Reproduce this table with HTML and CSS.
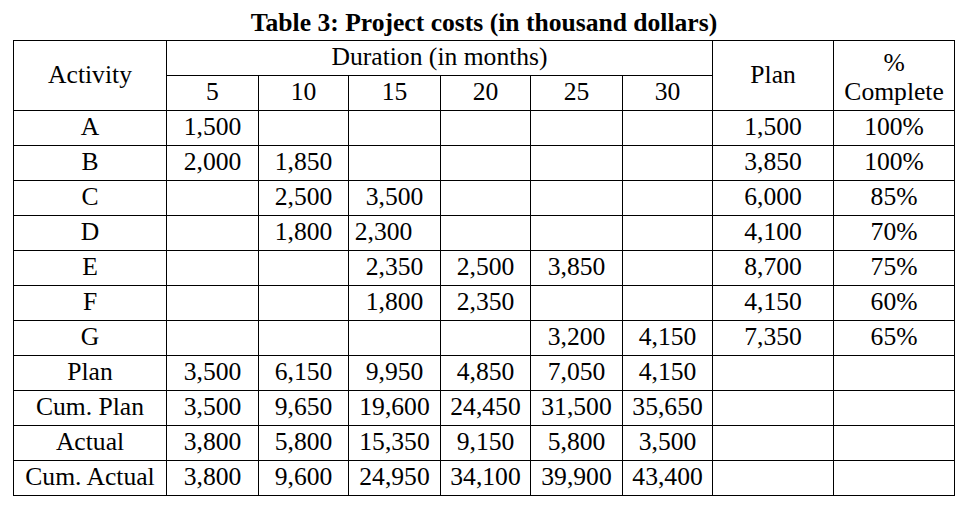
FILE: index.html
```html
<!DOCTYPE html>
<html>
<head>
<meta charset="utf-8">
<link rel="stylesheet" href="styles.css">
</head>
<body>
<div class="wrap">
  <div class="title">Table 3: Project costs (in thousand dollars)</div>
  <table class="costs">
    <colgroup>
      <col class="c-act"><col class="c-a"><col class="c-b"><col class="c-a"><col class="c-b"><col class="c-a"><col class="c-b"><col class="c-plan"><col class="c-plan">
    </colgroup>
    <tr>
      <td rowspan="2" class="hd-mid">Activity</td>
      <td colspan="6">Duration (in months)</td>
      <td rowspan="2" class="hd-mid">Plan</td>
      <td rowspan="2" class="hd-top">%<br>Complete</td>
    </tr>
    <tr><td>5</td><td>10</td><td>15</td><td>20</td><td>25</td><td>30</td></tr>
    <tr><td>A</td><td>1,500</td><td></td><td></td><td></td><td></td><td></td><td>1,500</td><td>100%</td></tr>
    <tr><td>B</td><td>2,000</td><td>1,850</td><td></td><td></td><td></td><td></td><td>3,850</td><td>100%</td></tr>
    <tr><td>C</td><td></td><td>2,500</td><td>3,500</td><td></td><td></td><td></td><td>6,000</td><td>85%</td></tr>
    <tr><td>D</td><td></td><td>1,800</td><td class="shift">2,300</td><td></td><td></td><td></td><td>4,100</td><td>70%</td></tr>
    <tr><td>E</td><td></td><td></td><td>2,350</td><td>2,500</td><td>3,850</td><td></td><td>8,700</td><td>75%</td></tr>
    <tr><td>F</td><td></td><td></td><td>1,800</td><td>2,350</td><td></td><td></td><td>4,150</td><td>60%</td></tr>
    <tr><td>G</td><td></td><td></td><td></td><td></td><td>3,200</td><td>4,150</td><td>7,350</td><td>65%</td></tr>
    <tr><td>Plan</td><td>3,500</td><td>6,150</td><td>9,950</td><td>4,850</td><td>7,050</td><td>4,150</td><td></td><td></td></tr>
    <tr><td>Cum. Plan</td><td>3,500</td><td>9,650</td><td>19,600</td><td>24,450</td><td>31,500</td><td>35,650</td><td></td><td></td></tr>
    <tr><td>Actual</td><td>3,800</td><td>5,800</td><td>15,350</td><td>9,150</td><td>5,800</td><td>3,500</td><td></td><td></td></tr>
    <tr><td>Cum. Actual</td><td>3,800</td><td>9,600</td><td>24,950</td><td>34,100</td><td>39,900</td><td>43,400</td><td></td><td></td></tr>
  </table>
</div>
</body>
</html>
```

FILE: styles.css
```css
html, body {
  margin: 0;
  padding: 0;
  background: #fff;
}
body {
  font-family: "Liberation Serif", "Times New Roman", serif;
  font-size: 25.6px;
  color: #000;
}
.wrap {
  width: 942px;
  padding: 9px 0 0 13px;
}
.title {
  font-weight: bold;
  text-align: center;
  line-height: 28px;
  margin-bottom: 3px;
}
.costs {
  border-collapse: collapse;
  table-layout: fixed;
  width: 942px;
}
.c-act { width: 153px; }
.c-a { width: 92px; }
.c-b { width: 90px; }
.c-plan { width: 121px; }
.costs tr {
  height: 35px;
}
.costs td {
  border: 1px solid #000;
  padding: 0 0 2px;
  text-align: center;
  vertical-align: middle;
  white-space: nowrap;
  line-height: 28px;
}
.costs td.hd-mid {
  padding-bottom: 2px;
}
.costs td.hd-top {
  vertical-align: top;
  line-height: 29px;
  padding: 7px 0 0;
}
.costs td.shift {
  padding-right: 22px;
}
```
